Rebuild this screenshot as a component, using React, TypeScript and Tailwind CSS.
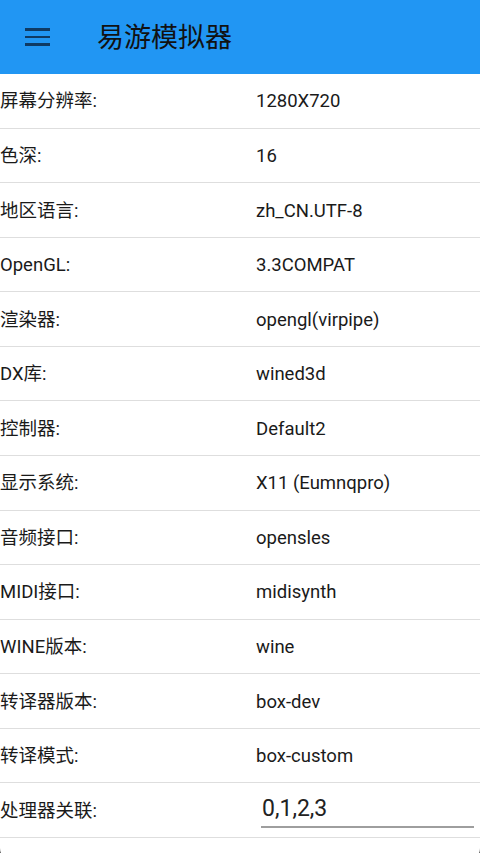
import React from "react";

const rows: [string, string][] = [
  ["屏幕分辨率:", "1280X720"],
  ["色深:", "16"],
  ["地区语言:", "zh_CN.UTF-8"],
  ["OpenGL:", "3.3COMPAT"],
  ["渲染器:", "opengl(virpipe)"],
  ["DX库:", "wined3d"],
  ["控制器:", "Default2"],
  ["显示系统:", "X11 (Eumnqpro)"],
  ["音频接口:", "opensles"],
  ["MIDI接口:", "midisynth"],
  ["WINE版本:", "wine"],
  ["转译器版本:", "box-dev"],
  ["转译模式:", "box-custom"],
];

export default function App() {
  return (
    <div
      className="w-[480px] h-[853px] overflow-hidden bg-black"
      style={{ fontFamily: "Roboto, 'Noto Sans CJK SC', sans-serif" }}
    >
      <div className="bg-white rounded-b-[18px] h-[866px]">
        <header className="h-[74px] bg-[#2196F3] flex items-center">
          <div className="w-[25px] ml-[25px] flex flex-col gap-[5px]">
            <div className="h-[2.5px] bg-[#0f3a63]" />
            <div className="h-[2.5px] bg-[#0f3a63]" />
            <div className="h-[2.5px] bg-[#0f3a63]" />
          </div>
          <div className="ml-[47px] mt-[2px] text-[27px] text-[#111] leading-none">易游模拟器</div>
        </header>
        {rows.map(([k, v]) => (
          <div
            key={k}
            className="h-[54.57px] border-b border-[#dedede] flex items-center pt-[3px] text-[18.5px] text-[#1a1a1a]"
          >
            <div className="w-[256px] pl-0">{k}</div>
            <div>{v}</div>
          </div>
        ))}
        <div className="h-[54.57px] border-b border-[#dedede] flex items-center pt-[3px] text-[18.5px] text-[#1a1a1a]">
          <div className="w-[261px]">处理器关联:</div>
          <div className="w-[213px] h-full flex flex-col justify-end pb-[9px]">
            <div className="text-[23px] leading-[26px] pl-[1px] text-[#222]">0,1,2,3</div>
            <div className="h-[2px] bg-[#9e9e9e] mt-[4px]" />
          </div>
        </div>
      </div>
    </div>
  );
}
